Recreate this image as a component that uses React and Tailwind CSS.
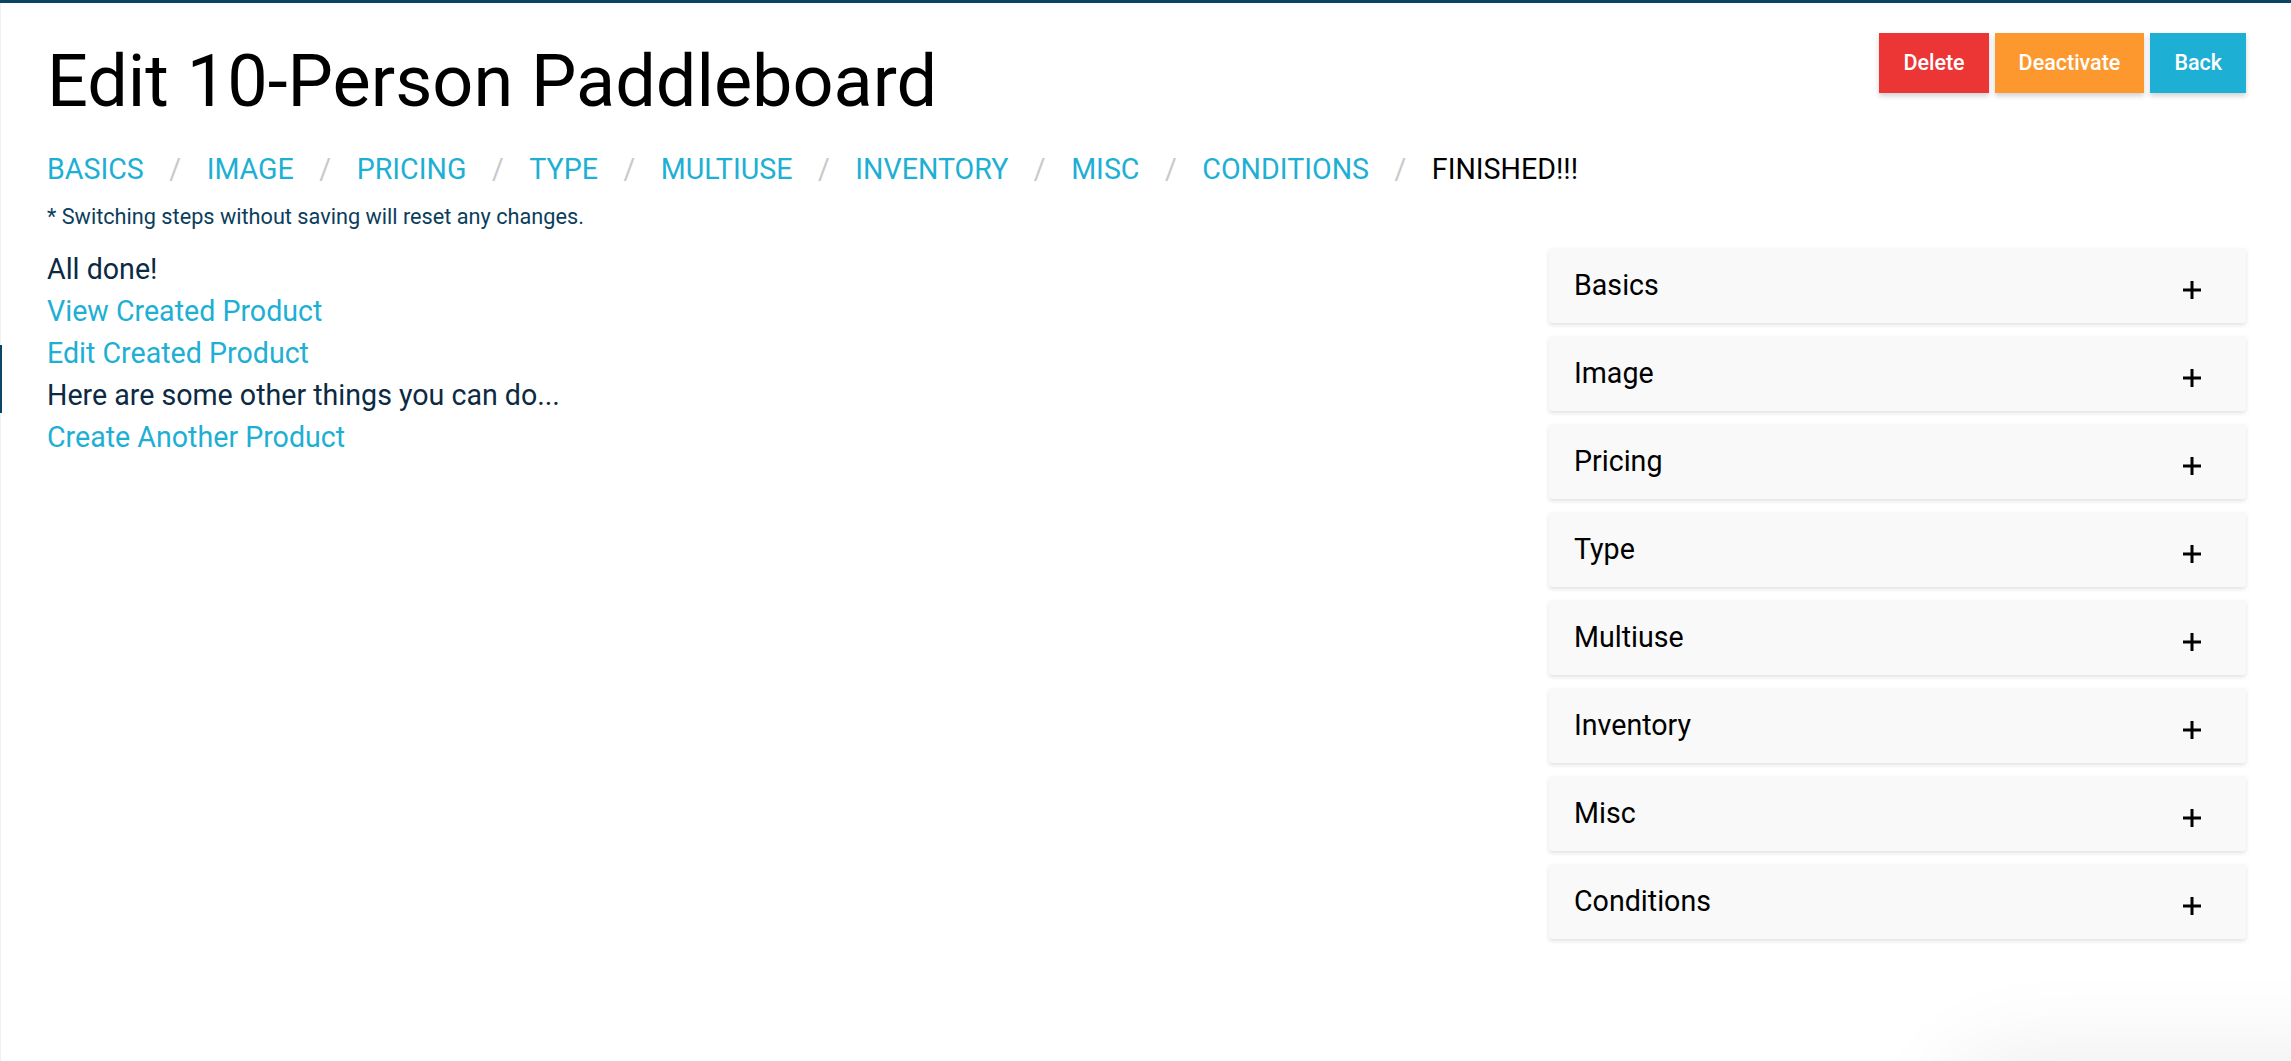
const steps = ["BASICS", "IMAGE", "PRICING", "TYPE", "MULTIUSE", "INVENTORY", "MISC", "CONDITIONS"];
const sections = ["Basics", "Image", "Pricing", "Type", "Multiuse", "Inventory", "Misc", "Conditions"];

const Plus = () => (
  <svg width="20" height="20" viewBox="0 0 20 20" className="shrink-0">
    <path d="M10 1v18M1 10h18" stroke="#000" strokeWidth="3" />
  </svg>
);

export default function App() {
  return (
    <div className="relative h-[1061px] w-full overflow-hidden bg-white font-['Roboto',sans-serif]">
      {/* top bar */}
      <div className="h-[3px] bg-[#0b4566]" />
      {/* left edge */}
      <div className="absolute left-0 top-[3px] h-full w-px bg-[#f1f1f1]" />
      <div className="absolute left-0 top-[345px] h-[68px] w-[2px] bg-[#0b4566]" />

      <div className="flex items-start justify-between pl-[47px] pr-[45px]">
        <h1 className="mt-[24px] text-[72px] leading-[110px] text-black">Edit 10-Person Paddleboard</h1>
        <div className="mt-[30px] flex gap-[6px]">
          <button className="h-[60px] bg-[#ec3535] px-6 text-[21.5px] font-medium text-white shadow-[0_3px_5px_rgba(0,0,0,0.18)]">Delete</button>
          <button className="h-[60px] bg-[#fd982f] px-6 text-[21.5px] font-medium text-white shadow-[0_3px_5px_rgba(0,0,0,0.18)]">Deactivate</button>
          <button className="h-[60px] bg-[#1eafd4] px-6 text-[21.5px] font-medium text-white shadow-[0_3px_5px_rgba(0,0,0,0.18)]">Back</button>
        </div>
      </div>

      <div className="pl-[47px]">
        <div className="mt-[12px] flex items-center text-[28.6px] leading-[40px]">
          {steps.map((s) => (
            <div key={s} className="flex items-center">
              <span className="text-[#1eafd4]">{s}</span>
              <span className="mx-[25.5px] text-[#c9c9c9]">/</span>
            </div>
          ))}
          <span className="text-black">FINISHED!!!</span>
        </div>
        <p className="mt-[15px] text-[21.7px] leading-[26px] text-[#0b3d5c]">* Switching steps without saving will reset any changes.</p>
      </div>

      <div className="mt-[18px] flex items-start justify-between pl-[47px] pr-[45px]">
        <div className="flex flex-col text-[28.6px] leading-[42px]">
          <span className="text-[#0c2a43]">All done!</span>
          <a className="text-[#1eafd4]">View Created Product</a>
          <a className="text-[#1eafd4]">Edit Created Product</a>
          <span className="text-[#0c2a43]">Here are some other things you can do...</span>
          <a className="text-[#1eafd4]">Create Another Product</a>
        </div>

        <div className="flex w-[697px] flex-col gap-[13px]">
          {sections.map((s) => (
            <div
              key={s}
              className="flex h-[75px] items-center justify-between rounded-[3px] bg-[#f9f9f9] pl-[25px] pr-[44px] shadow-[0_2px_4px_rgba(0,0,0,0.12)]"
            >
              <span className="text-[28.6px] text-black">{s}</span>
              <div className="mt-[8px]">
                <Plus />
              </div>
            </div>
          ))}
        </div>
      </div>

      {/* floating shadow, bottom right */}
      <div className="absolute left-[1980px] top-[1090px] h-[80px] w-[400px] rounded-full shadow-[0_0_90px_40px_rgba(0,0,0,0.07)]" />
    </div>
  );
}
